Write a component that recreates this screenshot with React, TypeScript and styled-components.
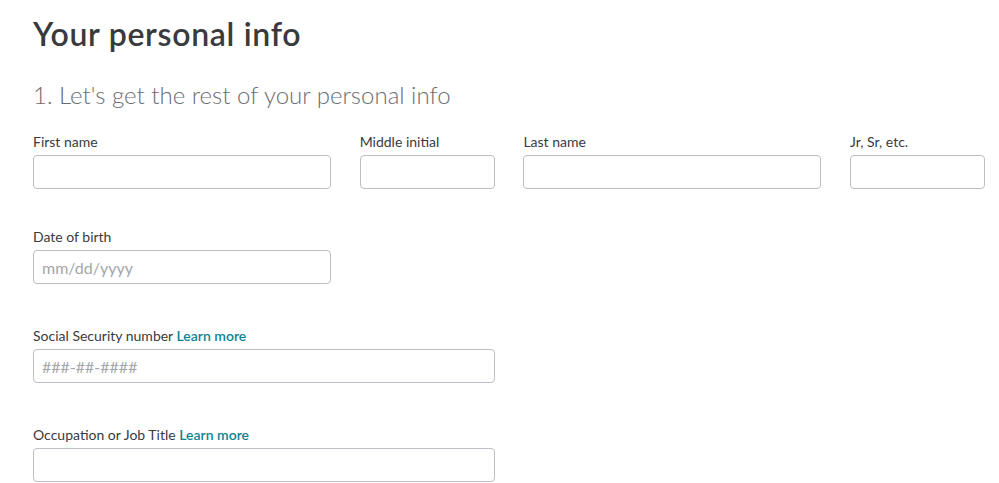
import styled, { createGlobalStyle } from 'styled-components'

const GlobalStyle = createGlobalStyle`
  body {
    margin: 0;
    background: #fff;
    font-family: Lato, "Noto Sans", sans-serif;
    color: #393a3d;
  }
`

const Page = styled.main`
  padding: 14px 33px 0;
`

const Title = styled.h1`
  margin: 0;
  font-size: 32px;
  line-height: 40px;
  font-weight: 600;
  letter-spacing: 0.7px;
  color: #393a3d;
`

const Subtitle = styled.h2`
  margin: 26px 0 0;
  font-size: 24px;
  line-height: 30px;
  font-weight: 300;
  color: #6b6c72;
`

const NameRow = styled.div`
  display: grid;
  grid-template-columns: 298px 135px 298px 135px;
  column-gap: 28.7px;
  margin-top: 22px;
`

const Stack = styled.div`
  display: flex;
  flex-direction: column;
  gap: 42px;
  margin-top: 38px;
`

const Field = styled.label<{ $width?: number }>`
  display: flex;
  flex-direction: column;
  gap: 3px;
  width: ${p => (p.$width ? `${p.$width}px` : 'auto')};
`

const LabelText = styled.span`
  font-size: 14px;
  line-height: 20px;
  color: #393a3d;
`

const Link = styled.a`
  color: #0d8391;
  font-weight: 600;
  text-decoration: none;
`

const Input = styled.input`
  box-sizing: border-box;
  height: 34px;
  width: 100%;
  padding: 0 8px;
  border: 1px solid #babec5;
  border-radius: 4px;
  font-family: inherit;
  font-size: 16px;
  color: #393a3d;
  background: #fff;

  &::placeholder {
    color: #a4a6ab;
  }
`

const App = () => {
  return (
    <>
      <GlobalStyle />
      <Page>
        <Title>Your personal info</Title>
        <Subtitle>1. Let's get the rest of your personal info</Subtitle>
        <NameRow>
          <Field>
            <LabelText>First name</LabelText>
            <Input />
          </Field>
          <Field>
            <LabelText>Middle initial</LabelText>
            <Input />
          </Field>
          <Field>
            <LabelText>Last name</LabelText>
            <Input />
          </Field>
          <Field>
            <LabelText>Jr, Sr, etc.</LabelText>
            <Input />
          </Field>
        </NameRow>
        <Stack>
          <Field $width={298}>
            <LabelText>Date of birth</LabelText>
            <Input placeholder="mm/dd/yyyy" />
          </Field>
          <Field $width={462}>
            <LabelText>
              Social Security number <Link href="#">Learn more</Link>
            </LabelText>
            <Input placeholder="###-##-####" />
          </Field>
          <Field $width={462}>
            <LabelText>
              Occupation or Job Title <Link href="#">Learn more</Link>
            </LabelText>
            <Input />
          </Field>
        </Stack>
      </Page>
    </>
  )
}

export default App
